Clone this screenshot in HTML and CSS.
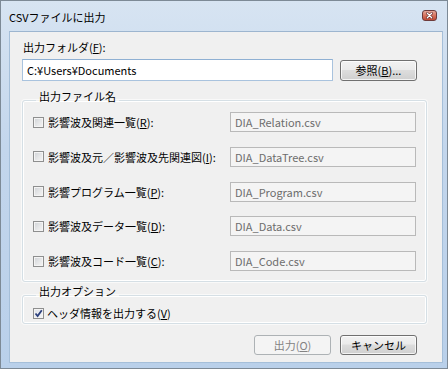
FILE: index.html
```html
<!DOCTYPE html>
<html lang="ja">
<head>
<meta charset="utf-8">
<title>CSVファイルに出力</title>
<link rel="stylesheet" href="styles.css">
</head>
<body>
<div class="window">
  <div class="titlebar">
    <span class="title">CSVファイルに出力</span>
    <span class="close">
      <svg width="15" height="11" viewBox="0 0 15 11">
        <path d="M5 3 L10 8 M10 3 L5 8" stroke="#5a2020" stroke-width="3" stroke-linecap="round"/>
        <path d="M5 3 L10 8 M10 3 L5 8" stroke="#ffffff" stroke-width="1.6" stroke-linecap="round"/>
      </svg>
    </span>
  </div>
  <div class="client">
    <div class="folder-label">出力フォルダ(<u>F</u>):</div>
    <div class="folder-row">
      <div class="textbox folder-box">C:¥Users¥Documents</div>
      <button class="btn">参照(<u>B</u>)...</button>
    </div>
    <fieldset class="group files">
      <legend>出力ファイル名</legend>
      <div class="file-row">
        <span class="check"></span>
        <span class="file-label">影響波及関連一覧(<u>R</u>):</span>
        <div class="textbox disabled">DIA_Relation.csv</div>
      </div>
      <div class="file-row">
        <span class="check"></span>
        <span class="file-label">影響波及元／影響波及先関連図(<u>I</u>):</span>
        <div class="textbox disabled">DIA_DataTree.csv</div>
      </div>
      <div class="file-row">
        <span class="check"></span>
        <span class="file-label">影響プログラム一覧(<u>P</u>):</span>
        <div class="textbox disabled">DIA_Program.csv</div>
      </div>
      <div class="file-row">
        <span class="check"></span>
        <span class="file-label">影響波及データ一覧(<u>D</u>):</span>
        <div class="textbox disabled">DIA_Data.csv</div>
      </div>
      <div class="file-row">
        <span class="check"></span>
        <span class="file-label">影響波及コード一覧(<u>C</u>):</span>
        <div class="textbox disabled">DIA_Code.csv</div>
      </div>
    </fieldset>
    <fieldset class="group options">
      <legend>出力オプション</legend>
      <div class="option-row">
        <span class="check checked">
          <svg width="9" height="9" viewBox="0 0 9 9">
            <path d="M1.5 4.5 L3.6 7 L7.8 1.2" fill="none" stroke="#2b3f7c" stroke-width="1.8"/>
          </svg>
        </span>
        <span class="option-label">ヘッダ情報を出力する(<u>V</u>)</span>
      </div>
    </fieldset>
    <div class="actions">
      <button class="btn disabled-btn">出力(<u>O</u>)</button>
      <button class="btn">キャンセル</button>
    </div>
  </div>
</div>
</body>
</html>
```

FILE: styles.css
```css
* { box-sizing: border-box; }
html, body {
  margin: 0;
  background: #ffffff;
}
body {
  font-family: "Noto Sans CJK JP", "Noto Sans", sans-serif;
  font-size: 11px;
  color: #000;
}
.window {
  width: 448px;
  height: 369px;
  border: 1px solid #7d8a96;
  background: linear-gradient(180deg, #d7e4f2 0%, #c3d6ec 40%, #b9d0ea 100%);
  display: flex;
  flex-direction: column;
  padding: 0 4px 5px 8px;
}
.titlebar {
  height: 30px;
  display: flex;
  align-items: center;
  justify-content: space-between;
  padding-right: 6px;
}
.title {
  line-height: 14px;
  padding-top: 1px;
  color: #000;
}
.close {
  width: 15px;
  height: 11px;
  border: 1px solid #6e3b3b;
  border-radius: 3px;
  background: linear-gradient(180deg, #e6a89a 0%, #d6745f 50%, #c04a35 100%);
  display: flex;
  align-items: center;
  justify-content: center;
  margin-top: -2px;
}
.close svg { display: block; }
.client {
  flex: 1;
  background: #f0f0f0;
  border: 1px solid #a5bfd9;
  border-top-color: #9db5cf;
  padding: 7px 17px 0 12px;
  display: flex;
  flex-direction: column;
}
.folder-label {
  line-height: 16px;
  padding-left: 1px;
}
.folder-row {
  display: flex;
  align-items: center;
  margin-top: 4px;
}
.textbox {
  height: 22px;
  border: 1px solid #abadb3;
  border-left-color: #e2e3ea;
  border-right-color: #dbdfe6;
  border-bottom-color: #e3e9ef;
  background: #fff;
  padding: 0 4px;
  display: flex;
  align-items: center;
  line-height: 14px;
}
.folder-box {
  width: 311px;
  border-color: #a9c3de;
  border-top-color: #8fb0d3;
}
.btn {
  font: inherit;
  color: #000;
  height: 21px;
  width: 77px;
  padding: 0;
  border: 1px solid #707070;
  border-radius: 3px;
  background: linear-gradient(180deg, #f2f2f2 0%, #ebebeb 45%, #dddddd 50%, #cfcfcf 100%);
  box-shadow: inset 0 0 0 1px rgba(255,255,255,0.75);
  line-height: 14px;
}
.folder-row .btn { margin-left: 7px; }
.group {
  margin: 8px 0 0 0;
  border: 1px solid #d5dfe5;
  border-radius: 3px;
  box-shadow: inset 0 0 0 1px #ffffff, 0 0 0 1px rgba(255,255,255,0.6);
  min-width: 0;
  width: 405px;
}
.group legend {
  line-height: 14px;
  padding: 0 3px 8px 3px;
  margin-left: 3px;
}
.files {
  padding: 1px 10px 10px 10px;
  display: flex;
  flex-direction: column;
  gap: 14.75px;
}
.file-row {
  display: grid;
  grid-template-columns: 11px 1fr 186px;
  column-gap: 4px;
  align-items: center;
  height: 20px;
}
.file-row .textbox { height: 20px; }
.disabled {
  background: #f4f4f4;
  border-color: #b9b9b9;
  color: #6d6d6d;
}
.check {
  width: 11px;
  height: 11px;
  border: 1px solid #8e8f8f;
  background: linear-gradient(135deg, #cfd2d6 0%, #e8e9ea 60%, #f4f4f4 100%);
  box-shadow: inset 0 0 0 1px #f4f4f4;
  display: flex;
  align-items: center;
  justify-content: center;
}
.check.checked {
  background: linear-gradient(135deg, #dfe3ea 0%, #f3f4f6 100%);
}
.check svg { display: block; }
.options {
  margin-top: 2px;
  padding: 0 10px 3px 10px;
}
.option-row {
  display: flex;
  align-items: center;
  gap: 3px;
  height: 14px;
}
.actions {
  display: flex;
  justify-content: flex-end;
  gap: 9px;
  margin-top: 11px;
  padding-right: 8px;
}
.actions .btn { height: 20px; }
.disabled-btn {
  border-color: #adb2b5;
  background: #f4f4f4;
  box-shadow: none;
  color: #838383;
}
```
